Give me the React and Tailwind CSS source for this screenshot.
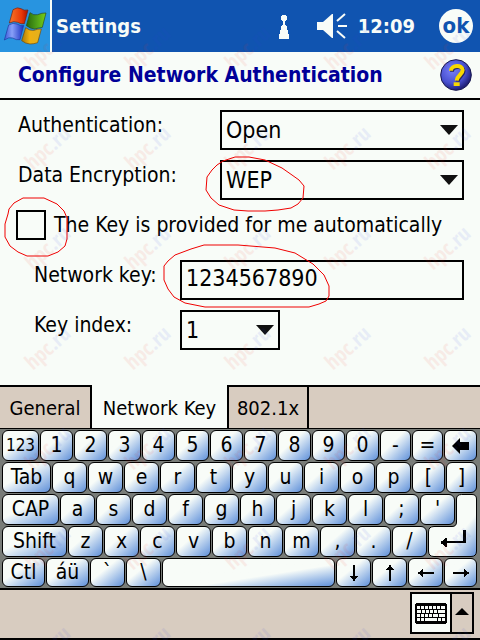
import React, { useState } from 'react';

const ROW_DIGITS = ['123', '1', '2', '3', '4', '5', '6', '7', '8', '9', '0', '-', '='];
const ROW_TOP = ['Tab', 'q', 'w', 'e', 'r', 't', 'y', 'u', 'i', 'o', 'p', '[', ']'];
const ROW_HOME = ['CAP', 'a', 's', 'd', 'f', 'g', 'h', 'j', 'k', 'l', ';', "'"];
const ROW_BOTTOM = ['Shift', 'z', 'x', 'c', 'v', 'b', 'n', 'm', ',', '.', '/'];
const TABS = [
  { name: 'General', width: 'w-[92px]' },
  { name: 'Network Key', width: 'w-[137px]' },
  { name: '802.1x', width: 'w-[80px]' },
];

const WindowsLogo = () => (
  <svg viewBox="0 0 150 156" className="w-[50px] h-[52px]" aria-hidden="true">
    <defs>
      <linearGradient id="flagRed"><stop offset="0" stopColor="#f87828" /><stop offset=".65" stopColor="#e83808" /><stop offset="1" stopColor="#a81000" /></linearGradient>
      <linearGradient id="flagGreen"><stop offset="0" stopColor="#286808" /><stop offset=".45" stopColor="#489818" /><stop offset="1" stopColor="#78d018" /></linearGradient>
      <linearGradient id="flagBlue"><stop offset="0" stopColor="#3858d8" /><stop offset=".4" stopColor="#88a0f8" /><stop offset="1" stopColor="#1830c0" /></linearGradient>
      <linearGradient id="flagYellow"><stop offset="0" stopColor="#a87808" /><stop offset=".4" stopColor="#f0b010" /><stop offset="1" stopColor="#e0b020" /></linearGradient>
    </defs>
    <path d="M39 29Q52 20 63 26Q73 33 84 30L73 71Q63 73 53 67Q42 62 28 69Z" fill="url(#flagRed)" stroke="#702010" strokeWidth="2" />
    <path d="M90 38Q101 47 113 44Q126 38 138 39L127 82Q114 84 104 87Q91 86 79 77Z" fill="url(#flagGreen)" stroke="#284818" strokeWidth="2" />
    <path d="M26 75Q40 67 51 72Q62 79 71 76L60 119Q49 121 38 114Q27 110 13 120Z" fill="url(#flagBlue)" stroke="#2038a0" strokeWidth="2" />
    <path d="M77 83Q89 93 102 91Q114 86 124 87L113 128Q102 132 90 132Q76 131 65 122Z" fill="url(#flagYellow)" stroke="#704808" strokeWidth="2" />
  </svg>
);

const ConnectionIcon = () => (
  <svg viewBox="0 0 12 26" className="w-3 h-[26px] fill-[#f8fcf8]" shapeRendering="crispEdges" aria-hidden="true">
    <path d="M4 2h4v1h1v4H8v1H7v4h1v1h1v4h1v4h1v5H1v-5h1v-4h1v-4h1v-1h1V8H4V7H3V3h1z" />
  </svg>
);

const SpeakerIcon = () => (
  <svg viewBox="0 0 32 26" className="w-8 h-[26px]" aria-hidden="true">
    <path d="M1 9h6L16 1h1v24h-1L7 17H1z" fill="#f8fcf8" />
    <path d="M21 8l8-7M22 13h9M21 18l8 7" stroke="#f8fcf8" strokeWidth="2" fill="none" />
  </svg>
);

const HelpIcon = () => (
  <svg viewBox="0 0 96 96" className="w-8 h-8" aria-hidden="true">
    <defs>
      <radialGradient id="helpBall" cx=".38" cy=".35" r=".65">
        <stop offset="0" stopColor="#7880f8" />
        <stop offset=".65" stopColor="#4850d0" />
        <stop offset="1" stopColor="#202078" />
      </radialGradient>
    </defs>
    <circle cx="48" cy="48" r="46" fill="url(#helpBall)" stroke="#181850" strokeWidth="3" />
    <path d="M33 35C33 18 68 16 68 33C68 47 51 49 50 65" transform="translate(3 3)" fill="none" stroke="#282860" strokeWidth="12" />
    <path d="M33 35C33 18 68 16 68 33C68 47 51 49 50 65" fill="none" stroke="#f8d800" strokeWidth="12" />
    <path d="M41 70h18v11H41z" fill="#f8d800" />
  </svg>
);

const DropArrow = () => (
  <svg viewBox="0 0 18 10" className="absolute right-[6px] top-[15px] w-[18px] h-[10px] pointer-events-none" aria-hidden="true">
    <path d="M0 0h18L9 10z" fill="#101010" />
  </svg>
);

const SelectBox = ({ id, options, className }) => (
  <div className={`relative h-10 ${className}`}>
    <select id={id} className="appearance-none w-full h-full border-2 border-black bg-[#f8fcf8] pl-1 pr-7 text-[23px] leading-7 outline-none">
      {options.map((o) => <option key={o}>{o}</option>)}
    </select>
    <DropArrow />
  </div>
);

const Key = ({ label, children, small }) => (
  <button
    type="button"
    aria-label={label}
    className={`mr-px min-w-0 flex items-center justify-center rounded-[6px] border border-black bg-linear-to-br from-[#f8fcf8] from-40% to-[#6090d8] ${small ? 'text-[17px]' : 'text-[21px]'}`}
  >
    {children || label}
  </button>
);

const arrows = {
  Down: 'M7 0h2v11h3v1h-1v1h-1v1H9v2H7v-2H6v-1H5v-1H4v-1h3z',
  Up: 'M7 16h2V5h3V4h-1V3h-1V2H9V0H7v2H6v1H5v1H4v1h3z',
  Left: 'M16 7v2H5v3H4v-1H3v-1H2V9H0V7h2V6h1V5h1V4h1v3z',
  Right: 'M0 7v2h11v3h1v-1h1v-1h1V9h2V7h-2V6h-1V5h-1V4h-1v3z',
};

const ArrowKey = ({ dir }) => (
  <Key label={dir}>
    <svg viewBox="0 0 16 16" className="w-4 h-4" shapeRendering="crispEdges" aria-hidden="true"><path d={arrows[dir]} /></svg>
  </Key>
);

// Enter covers the end of two rows, so its face reaches up into the row above
const EnterKey = () => (
  <button type="button" aria-label="Enter" className="relative mr-px">
    <svg viewBox="0 0 49 63" className="absolute bottom-0 right-0 w-[49px] h-[63px]" aria-hidden="true">
      <defs>
        <linearGradient id="enterFace" x1="0" y1="0" x2="1" y2="1">
          <stop offset=".65" stopColor="#f8fcf8" />
          <stop offset="1" stopColor="#6090d8" />
        </linearGradient>
      </defs>
      <path d="M33.500 .5H44Q48.500 .5 48.500 5V57Q48.500 62.500 43 62.500H6Q.5 62.500 .5 57V38Q.5 32.500 6 32.500H24Q28.500 32.500 28.500 28V5Q28.500 .5 33.500 .5Z" fill="url(#enterFace)" stroke="#000" />
      <path d="M35 36h3v13H19v4h-2v-1h-1v-1h-1v-1h-2v-3h2v-1h1v-1h1v-1h2v3h16z" />
    </svg>
  </button>
);

const Keyboard = () => (
  <div className="bg-[#787c78] border-t border-black pt-px px-[2px] leading-none">
    <div className="grid h-8 pb-px grid-cols-[38fr_repeat(10,34fr)_32fr_32fr_34fr]">
      {ROW_DIGITS.map((k) => <Key key={k} label={k} small={k === '123'} />)}
      <Key label="Backspace">
        <svg viewBox="0 0 17 18" className="w-[17px] h-[18px]" aria-hidden="true"><path d="M0 9L8 1V5H17V13H8V17Z" /></svg>
      </Key>
    </div>
    <div className="grid h-8 pb-px grid-cols-[50fr_repeat(10,36fr)_34fr_32fr]">
      {ROW_TOP.map((k) => <Key key={k} label={k} />)}
    </div>
    <div className="grid h-8 pb-px grid-cols-[58fr_repeat(11,36fr)_22fr]">
      {ROW_HOME.map((k) => <Key key={k} label={k} />)}
    </div>
    <div className="grid h-8 pb-px grid-cols-[66fr_repeat(10,36fr)_50fr]">
      {ROW_BOTTOM.map((k) => <Key key={k} label={k} />)}
      <EnterKey />
    </div>
    <div className="grid h-[30px] pb-px grid-cols-[44fr_44fr_36fr_36fr_174fr_repeat(3,36fr)_34fr]">
      <Key label="Ctl" />
      <Key label="áü" />
      <Key label="`" />
      <Key label="\" />
      <button type="button" aria-label="Space" className="mr-px rounded-[6px] border border-black bg-linear-to-br from-[#f8fcf8] from-60% to-[#6090d8]" />
      <ArrowKey dir="Down" />
      <ArrowKey dir="Up" />
      <ArrowKey dir="Left" />
      <ArrowKey dir="Right" />
    </div>
  </div>
);

const Watermark = () => (
  <div aria-hidden="true" className="absolute inset-0 overflow-hidden pointer-events-none select-none opacity-8">
    <div className="grid grid-cols-[repeat(auto-fill,100px)] auto-rows-[100px] ml-[3px] -mt-2 -mr-[100px]">
      {Array.from({ length: 35 }, (_, i) => (
        <span key={i} className="flex items-center pl-4 font-['Open_Sans',sans-serif] font-bold text-[21px] -rotate-42">
          <span className="text-[#f03028]">hpc</span>
          <span className="text-[#3040e0]">.ru</span>
        </span>
      ))}
    </div>
  </div>
);

const App = () => {
  const [auto, setAuto] = useState(false);
  const [networkKey, setNetworkKey] = useState('1234567890');
  const [tab, setTab] = useState('Network Key');

  return (
    <div className="relative min-h-screen flex flex-col bg-[#f8fcf8] text-black text-[20px] leading-7 font-['DejaVu_Sans_Condensed','DejaVu_Sans',sans-serif] [font-stretch:condensed]">
      <header className="flex items-center h-[52px] bg-[#1054b0] text-[#f8fcf8] font-bold">
        <button type="button" aria-label="Start" className="w-[52px] h-[52px] bg-[#2894e0] border-r-2 border-[#f8fcf8]"><WindowsLogo /></button>
        <span className="pl-1">Settings</span>
        <div className="ml-auto flex items-center pr-[7px]">
          <ConnectionIcon />
          <span className="ml-[26px] py-px"><SpeakerIcon /></span>
          <span className="ml-[10px]">12:09</span>
          <button type="button" className="ml-6 w-[34px] h-[34px] rounded-full bg-[#f8fcf8] text-[#1054b0] text-[22px] leading-7 font-bold flex items-center justify-center">ok</button>
        </div>
      </header>

      <div className="flex items-center justify-between h-12 pl-[18px] pr-2 border-b-2 border-black">
        <h1 className="font-bold text-[21px] text-[#000098]">Configure Network Authentication</h1>
        <button type="button" aria-label="Help"><HelpIcon /></button>
      </div>

      <main className="grow flex flex-col gap-[10px] pt-[10px] px-4 pb-[35px] text-[21px] leading-[30px]">
        <div className="flex">
          <label htmlFor="auth" className="w-[204px] pl-[2px] shrink-0">Authentication:</label>
          <SelectBox id="auth" options={['Open', 'Shared']} className="grow" />
        </div>
        <div className="flex">
          <label htmlFor="encryption" className="w-[204px] pl-[2px] shrink-0">Data Encryption:</label>
          <div className="relative grow">
            <SelectBox id="encryption" options={['WEP', 'Disabled']} className="w-full" />
            <svg viewBox="0 0 100 56" className="absolute -left-[15px] -top-1 w-[100px] h-14 pointer-events-none" aria-hidden="true">
              <path d="M12 9L18 5L30 1H44L60 4L77 12L87 19L94 24L99 30L98 42L93 48L86 52L73 54L60 55L43 55L29 54L14 49L6 42L1 34L2 21L7 14Z" fill="none" stroke="#f00000" />
            </svg>
          </div>
        </div>
        <div className="relative flex items-center gap-2 h-10 -my-[5px]">
          <input id="auto" type="checkbox" checked={auto} onChange={(e) => setAuto(e.target.checked)} className="appearance-none w-[30px] h-[30px] shrink-0 border-2 border-black bg-[#f8fcf8] checked:bg-[#000098]" />
          <label htmlFor="auto">The Key is provided for me automatically</label>
          <svg viewBox="0 0 64 60" className="absolute -left-3 -top-2 w-16 h-[60px] pointer-events-none" aria-hidden="true">
            <path d="M5 12L10 6L19 1H40L53 7L60 14L63 21V42L61 49L54 55L44 59H23L14 55L6 49L1 40V27L4 17Z" fill="none" stroke="#f00000" />
          </svg>
        </div>
        <div className="flex mt-[10px]">
          <label htmlFor="netkey" className="w-[164px] pl-[18px] shrink-0">Network key:</label>
          <div className="relative grow">
            <input id="netkey" type="text" value={networkKey} onChange={(e) => setNetworkKey(e.target.value)} className="w-full h-10 block border-2 border-black bg-[#f8fcf8] px-1 pb-1 text-[23px] leading-7 outline-none" />
            <svg viewBox="0 0 168 64" className="absolute -left-[17px] -top-4 w-[168px] h-16 pointer-events-none" aria-hidden="true">
              <path d="M41 1H75L112 4L132 9L150 20L161 31L166 42V52L163 57L156 60L146 63H42L22 59L11 53L5 45L1 36V22L5 17L12 11L28 5Z" fill="none" stroke="#f00000" />
            </svg>
          </div>
        </div>
        <div className="flex">
          <label htmlFor="keyindex" className="w-[164px] pl-[18px] shrink-0">Key index:</label>
          <SelectBox id="keyindex" options={['1', '2', '3', '4']} className="w-[100px]" />
        </div>
      </main>

      <div role="tablist" className="flex h-[43px] bg-[#d8ccc0]">
        {TABS.map(({ name, width }) => (
          <button
            key={name}
            type="button"
            role="tab"
            aria-selected={tab === name}
            onClick={() => setTab(name)}
            className={`${width} whitespace-nowrap border-black border-r-2 ${tab === name ? 'bg-[#f8fcf8] pt-[2px]' : 'border-t-2'}`}
          >
            {name}
          </button>
        ))}
        <div className="grow border-t-2 border-black" />
      </div>

      <Keyboard />

      <footer className="flex items-start justify-end h-[52px] pt-[2px] pr-[6px] bg-[#d8ccc0] border-y-2 border-black">
        <button type="button" aria-label="Keyboard" className="w-[42px] h-[42px] flex items-center justify-center border-2 border-black bg-[#f8fcf8]">
          <svg viewBox="0 0 32 21" className="w-8 h-[21px]" shapeRendering="crispEdges" aria-hidden="true">
            <path d="M1 0h30v1h1v19h-1v1H1v-1H0V1h1z" />
            <path d="M2 4.500h28M2 8.500h28M2 12.500h28M2 16.500h28" stroke="#f8fcf8" strokeWidth="3" />
            <path d="M5.500 3v3M9.500 3v3M13.500 3v3M17.500 3v3M21.500 3v3M25.500 3v3M6.500 7v3M10.500 7v3M14.500 7v3M18.500 7v3M22.500 7v3M5.500 11v3M9.500 11v3M13.500 11v3M17.500 11v3M23.500 11v3M5.500 15v3M9.500 15v3M22.500 15v3M26.500 15v3" stroke="#000" />
          </svg>
        </button>
        <button type="button" aria-label="Input options" className="w-[22px] h-[42px] flex items-center justify-center pb-1 border-2 border-l-0 border-black">
          <svg viewBox="0 0 14 7" className="w-[14px] h-[7px]" aria-hidden="true"><path d="M7 0L14 7H0Z" /></svg>
        </button>
      </footer>

      <Watermark />
    </div>
  );
};

export default App;
